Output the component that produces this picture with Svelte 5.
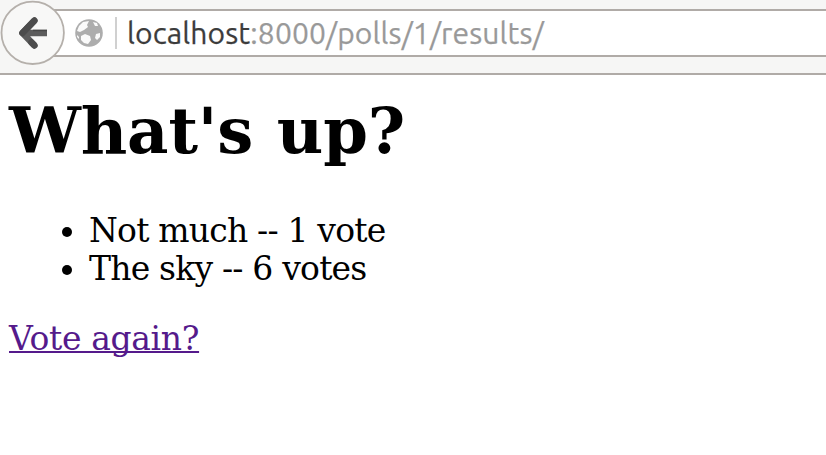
<script>
  const choices = ['Not much -- 1 vote', 'The sky -- 6 votes'];
</script>

<div class="window">
  <header>
    <div class="back">
      <svg width="66" height="66" viewBox="0 0 66 66">
        <circle cx="32.700" cy="32.800" r="31.2" fill="#f8f8f7" stroke="#b5b0ab" stroke-width="1.8" />
        <path d="M34.500 20.500L22.500 33L34.500 45.500M23 33H47" fill="none" stroke="#5c5c5c" stroke-width="6.500" stroke-linejoin="round" />
        <path d="M34.500 20.500L22.500 33M34.500 45.500L31.500 42.400" fill="none" stroke="#4c4c4c" stroke-width="6.500" stroke-linecap="round" />
        <path d="M33 30.500H47" stroke="#484848" stroke-width="1.500" />
      </svg>
    </div>
    <div class="address">
      <svg class="globe" width="28" height="28" viewBox="0 0 28 28">
        <circle cx="14" cy="14" r="13.800" fill="#adadad" />
        <path d="M4 7L8 3L14 2L12 6L13 8L9 11L5 13L2 12Z M6 17L10 15L15 17L16 21L13 25L9 24L6 21Z M18 3L22 4L23 7L20 7Z M21 15L25 14L25 18L22 21L20 19Z M2 16L4 18L4 20L2 18Z" fill="#fafafa" />
      </svg>
      <span class="sep"></span>
      <span class="url"><b>localhost</b>:8000/polls/1/results/</span>
    </div>
  </header>
  <main>
    <h1>What's up?</h1>
    <ul>
      {#each choices as choice}<li>{choice}</li>{/each}
    </ul>
    <a href="#vote">Vote again?</a>
  </main>
</div>

<style>
  .window { width: 826px; height: 455px; overflow: hidden; background: #fff; }
  header { box-sizing: border-box; height: 75px; display: flex; background: #f6f6f5; border-bottom: 2px solid #b0aba7; }
  .back { width: 66px; height: 66px; position: relative; z-index: 1; }
  .back svg { display: block; }
  .address { box-sizing: border-box; margin: 9px 0 0 -20px; height: 48px; flex: 1; display: flex; align-items: center; padding-left: 29px; background: #fff; border: 2px solid #b0aba7; border-width: 2px 0; }
  .sep { width: 2px; height: 32px; background: #d0d0d0; margin: 0 10px 0 12px; }
  .url { font: 30px Ubuntu, "Noto Sans", sans-serif; letter-spacing: 0.14px; color: #999; white-space: pre; -webkit-text-stroke: 0.25px; }
  b { font-weight: 400; color: #3c3c3c; }
  main { padding: 0 9px; font: 33px/38px "DejaVu Serif", serif; color: #000; }
  h1 { margin: 0; padding-top: 18px; font-size: 64px; line-height: 76px; letter-spacing: -0.15px; word-spacing: 1.5px; }
  ul { margin: 43px 0 32px; padding-left: 80px; letter-spacing: -0.8px; }
  a { color: #551a8b; letter-spacing: -0.35px; text-decoration-skip-ink: none; text-decoration-thickness: 2px; text-underline-offset: 1px; }
</style>
